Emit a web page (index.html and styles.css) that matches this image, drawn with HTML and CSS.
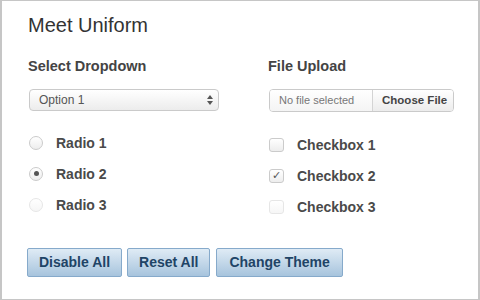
FILE: index.html
```html
<!DOCTYPE html>
<html>
<head>
  <link rel="stylesheet" href="styles.css">
</head>
<body>

  <div class="frame">
    <h1>Meet Uniform</h1>

    <div class="columns">
      <div class="column">
        <h2>Select Dropdown</h2>
        <div class="selector">
          <span>Option 1</span>
          <svg class="arrows" width="6" height="10" viewBox="0 0 6 10">
            <path d="M3 0 L6 4 L0 4 Z M0 6 L6 6 L3 10 Z" fill="#555"/>
          </svg>
        </div>

        <div class="options radios">
          <label class="option"><span class="radio"></span>Radio 1</label>
          <label class="option"><span class="radio checked"></span>Radio 2</label>
          <label class="option"><span class="radio disabled"></span>Radio 3</label>
        </div>
      </div>

      <div class="column">
        <h2>File Upload</h2>
        <div class="uploader">
          <span class="filename">No file selected</span>
          <span class="action">Choose File</span>
        </div>

        <div class="options checks">
          <label class="option"><span class="checker"></span>Checkbox 1</label>
          <label class="option"><span class="checker checked">&#10003;</span>Checkbox 2</label>
          <label class="option"><span class="checker disabled"></span>Checkbox 3</label>
        </div>
      </div>
    </div>

    <div class="button-row">
      <button>Disable All</button>
      <button>Reset All</button>
      <button class="wide">Change Theme</button>
    </div>
  </div>

</body>
</html>
```

FILE: styles.css
```css
body {
  margin: 0;
  font-family: "Liberation Sans", Arial, sans-serif;
  background: #fff;
}

.frame {
  box-sizing: border-box;
  height: 300px;
  border: solid #c6c6c6;
  border-width: 1px 2px;
  padding: 12px 0 0 26px;
}

h1 {
  margin: 0;
  font-size: 20px;
  line-height: 24px;
  font-weight: normal;
  color: #333;
}

.columns {
  display: grid;
  grid-template-columns: 240px 1fr;
  margin-top: 20px;
}

h2 {
  margin: 0 0 14px;
  font-size: 14.5px;
  line-height: 18px;
  color: #444;
}

.selector {
  box-sizing: border-box;
  display: flex;
  align-items: center;
  justify-content: space-between;
  width: 190px;
  height: 22px;
  margin-left: 1px;
  padding: 0 5px 0 9px;
  border: 1px solid #cacaca;
  border-radius: 4px;
  background: linear-gradient(#fff, #ececec);
  font-size: 12px;
  color: #555;
}

.uploader {
  box-sizing: border-box;
  display: flex;
  width: 185px;
  height: 23px;
  margin-left: 1px;
  border: 1px solid #cacaca;
  border-radius: 4px;
  overflow: hidden;
  line-height: 21px;
}

.uploader .filename {
  width: 93px;
  padding-left: 9px;
  border-right: 1px solid #d4d4d4;
  background: linear-gradient(#fff, #f4f4f4);
  font-size: 11px;
  color: #777;
}

.uploader .action {
  flex: 1;
  padding-left: 9px;
  background: linear-gradient(#fff, #ececec);
  font-size: 11.5px;
  font-weight: bold;
  color: #444;
}

.radios {
  margin-top: 16px;
}

.checks {
  margin-top: 17px;
}

.option {
  display: flex;
  align-items: center;
  gap: 13px;
  height: 31px;
  font-size: 14px;
  font-weight: bold;
  color: #4a4a4a;
}

.radio {
  box-sizing: border-box;
  display: flex;
  align-items: center;
  justify-content: center;
  width: 14px;
  height: 14px;
  margin-left: 1px;
  border: 1px solid #cbcbcb;
  border-radius: 50%;
  background: linear-gradient(#fff, #ededed);
}

.radio.checked::after {
  content: "";
  width: 5px;
  height: 5px;
  border-radius: 50%;
  background: #555;
}

.checker {
  box-sizing: border-box;
  display: flex;
  align-items: center;
  justify-content: center;
  width: 15px;
  height: 14px;
  margin-left: 1px;
  border: 1px solid #cbcbcb;
  border-radius: 3px;
  background: linear-gradient(#fff, #ededed);
  font-size: 11px;
  font-weight: normal;
  color: #555;
}

.radio.disabled,
.checker.disabled {
  border-color: #e6e6e6;
  background: linear-gradient(#fff, #f6f6f6);
}

.button-row {
  display: flex;
  gap: 5px;
  margin: 26px 0 0 -1px;
}

.button-row button {
  height: 29px;
  padding: 0 11px 1px;
  border: 1px solid #86aacb;
  border-radius: 2px;
  background: linear-gradient(#dfebf5, #a7c4dd);
  font-family: "Liberation Sans", Arial, sans-serif;
  font-size: 14px;
  font-weight: bold;
  color: #1f4466;
  cursor: pointer;
}

.button-row button.wide {
  padding: 0 12px 1px;
  margin-left: 1px;
}
```
